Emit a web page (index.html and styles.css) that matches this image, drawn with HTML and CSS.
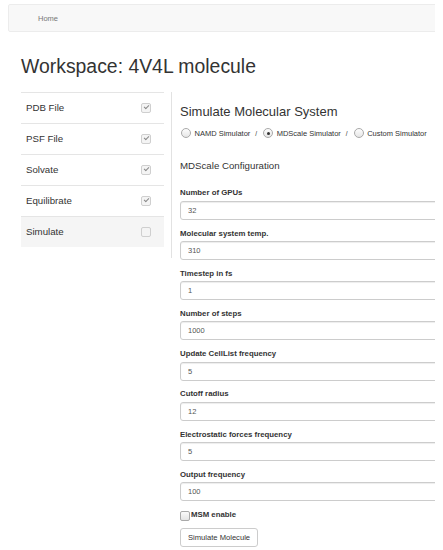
FILE: index.html
```html
<!DOCTYPE html>
<html lang="en">
<head>
    <meta charset="UTF-8">
    <title>Workspace: 4V4L molecule</title>
    <link rel="stylesheet" href="styles.css">
</head>
<body>
<div class="page">
    <div class="navbar">
        <a class="nav-link" href="#">Home</a>
    </div>
    <div class="container">
        <h1>Workspace: 4V4L molecule</h1>
        <div class="row">
            <ul class="steps">
                <li class="step">PDB File <span class="check checked"></span></li>
                <li class="step">PSF File <span class="check checked"></span></li>
                <li class="step">Solvate <span class="check checked"></span></li>
                <li class="step">Equilibrate <span class="check checked"></span></li>
                <li class="step active">Simulate <span class="check"></span></li>
            </ul>
            <div class="divider"></div>
            <div class="main">
                <h2>Simulate Molecular System</h2>
                <div class="sim-choice">
                    <label class="radio"><span class="dot"></span>NAMD Simulator</label>
                    <span class="sep">/</span>
                    <label class="radio"><span class="dot on"></span>MDScale Simulator</label>
                    <span class="sep">/</span>
                    <label class="radio"><span class="dot"></span>Custom Simulator</label>
                </div>
                <h3>MDScale Configuration</h3>
                <form class="config">
                    <div class="field">
                        <label>Number of GPUs</label>
                        <input type="text" value="32">
                    </div>
                    <div class="field">
                        <label>Molecular system temp.</label>
                        <input type="text" value="310">
                    </div>
                    <div class="field">
                        <label>Timestep in fs</label>
                        <input type="text" value="1">
                    </div>
                    <div class="field">
                        <label>Number of steps</label>
                        <input type="text" value="1000">
                    </div>
                    <div class="field">
                        <label>Update CellList frequency</label>
                        <input type="text" value="5">
                    </div>
                    <div class="field">
                        <label>Cutoff radius</label>
                        <input type="text" value="12">
                    </div>
                    <div class="field">
                        <label>Electrostatic forces frequency</label>
                        <input type="text" value="5">
                    </div>
                    <div class="field">
                        <label>Output frequency</label>
                        <input type="text" value="100">
                    </div>
                    <div class="msm">
                        <span class="box"></span><span class="msm-label">MSM enable</span>
                    </div>
                    <button type="button" class="btn">Simulate Molecule</button>
                </form>
            </div>
        </div>
    </div>
</div>
</body>
</html>
```

FILE: styles.css
```css
body {
    margin: 0;
    font-family: "Liberation Sans", Arial, sans-serif;
    color: #333;
    background: #fff;
}
.page {
    width: 427px;
    margin: 0 8px;
    padding-top: 4px;
    overflow: hidden;
}
.navbar {
    height: 26px;
    margin-right: -10px;
    background-color: #f8f8f8;
    border: 1px solid #ececec;
    border-radius: 2px;
    display: flex;
    align-items: center;
}
.nav-link {
    margin-left: 29px;
    font-size: 7.5px;
    color: #777;
    text-decoration: none;
}
.container {
    padding: 0 0 0 13px;
}
h1 {
    font-size: 19.4px;
    font-weight: normal;
    line-height: 24px;
    margin: 21.6px 0 14.4px;
}
.row {
    display: flex;
    align-items: flex-start;
}
.steps {
    list-style: none;
    margin: 0;
    padding: 0;
    width: 143px;
    flex: none;
    border-top: 1px solid #e5e5e5;
}
.step {
    height: 30px;
    border-bottom: 1px solid #e5e5e5;
    display: flex;
    align-items: center;
    justify-content: space-between;
    padding: 0 13px 0 5px;
    font-size: 9.7px;
}
.step.active {
    background-color: #f5f5f5;
    border-bottom: none;
}
.check {
    width: 8px;
    height: 8px;
    border: 1px solid #cfcfcf;
    border-radius: 2px;
    background: #f4f4f4;
    position: relative;
}
.check.checked::after {
    content: "";
    position: absolute;
    left: 1.5px;
    top: 1px;
    width: 4px;
    height: 2px;
    border-left: 1.2px solid #8a8a8a;
    border-bottom: 1.2px solid #8a8a8a;
    transform: rotate(-45deg);
}
.divider {
    width: 1px;
    height: 166px;
    background-color: #e2e2e2;
    margin-left: 7px;
    flex: none;
}
.main {
    flex: none;
    width: 300px;
    padding-left: 8px;
}
h2 {
    font-size: 13px;
    font-weight: normal;
    line-height: 15px;
    margin: 12.2px 0 9px;
}
.sim-choice {
    display: flex;
    align-items: center;
    font-size: 7.5px;
    height: 10px;
    white-space: nowrap;
}
.radio {
    display: flex;
    align-items: center;
    flex: none;
}
.dot {
    box-sizing: border-box;
    width: 10px;
    height: 10px;
    border: 1px solid #a9a9a9;
    border-radius: 50%;
    background: linear-gradient(#fdfdfd, #e6e6e6);
    margin-right: 3.5px;
    position: relative;
}
.radio:first-child .dot {
    margin-left: 1px;
}
.dot.on::after {
    content: "";
    position: absolute;
    left: 2.5px;
    top: 2.5px;
    width: 3px;
    height: 3px;
    border-radius: 50%;
    background: #333;
}
.sep {
    margin: 0 6px 0 5px;
    font-size: 6.5px;
}
h3 {
    font-size: 9.7px;
    font-weight: normal;
    line-height: 12px;
    margin: 21.6px 0 16.6px;
}
.field label {
    display: block;
    font-size: 7.8px;
    font-weight: bold;
    line-height: 10px;
    margin-bottom: 2.3px;
}
.field input {
    display: block;
    box-sizing: border-box;
    width: 300px;
    height: 19px;
    margin: 0 0 8.93px;
    padding: 0 7px;
    font-family: inherit;
    font-size: 7.5px;
    color: #555;
    border: 1px solid #ccc;
    border-radius: 3px;
    box-shadow: inset 0 1px 1px rgba(0, 0, 0, 0.075);
}
.msm {
    display: flex;
    align-items: flex-start;
    height: 14px;
    margin-bottom: 1.8px;
}
.box {
    box-sizing: border-box;
    width: 10px;
    height: 10px;
    border: 1px solid #a9a9a9;
    border-radius: 2px;
    background: linear-gradient(#fafafa, #e4e4e4);
    margin-top: 0.5px;
}
.msm-label {
    font-size: 7.8px;
    font-weight: bold;
    line-height: 10px;
    margin-left: 1px;
}
.btn {
    height: 19px;
    padding: 0 7px;
    font-family: inherit;
    font-size: 7.6px;
    color: #333;
    background: #fff;
    border: 1px solid #ccc;
    border-radius: 3px;
}
```
